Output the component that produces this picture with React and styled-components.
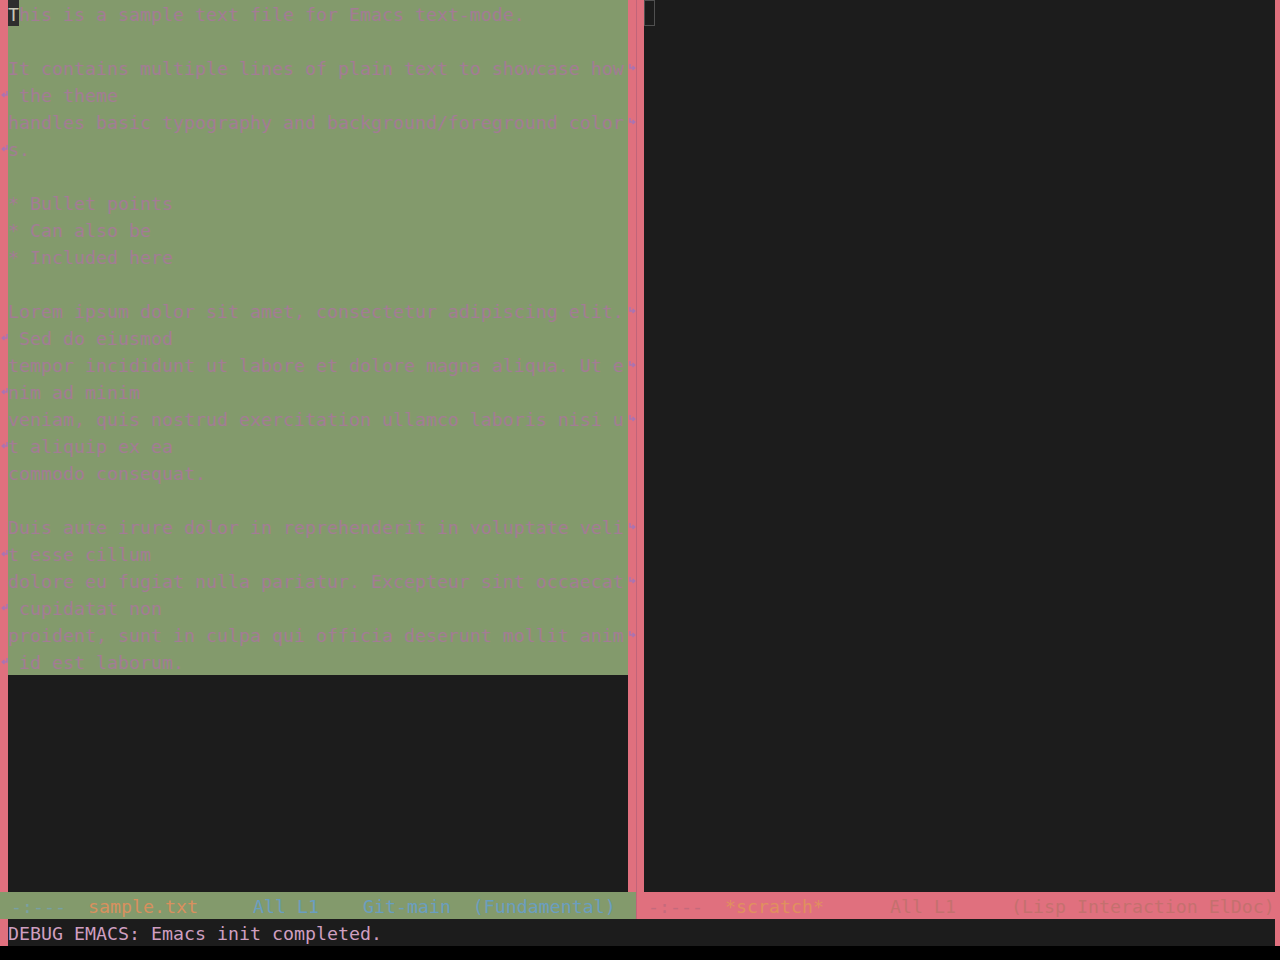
import React from "react";
import styled, { createGlobalStyle } from "styled-components";

const PINK = "#e0707e";
const GREEN = "#839a6c";
const DARK = "#1c1c1c";
const LINE = 27;

const Global = createGlobalStyle`
  html, body { margin: 0; padding: 0; background: #000; }
  body { font-family: "DejaVu Sans Mono", "Liberation Mono", monospace; }
`;

const Frame = styled.div`
  width: 1274px;
  height: 946px;
  display: grid;
  grid-template-rows: 1fr ${LINE}px;
  background: ${PINK};
  font-family: "DejaVu Sans Mono", monospace;
  font-size: 18.27px;
  line-height: 29px;
`;

const WindowsRow = styled.div`
  display: flex;
  min-height: 0;
`;

const Window = styled.div`
  display: flex;
  flex-direction: column;
  min-width: 0;
  width: ${(p) => (p.$width ? `${p.$width}px` : "auto")};
  flex: ${(p) => (p.$width ? "none" : "1")};
`;

const Body = styled.div`
  flex: 1;
  display: flex;
  min-height: 0;
`;

const FringeCol = styled.div`
  width: ${(p) => p.$w}px;
  flex: none;
  background: ${PINK};
  display: flex;
  flex-direction: column;
`;

const FringeCell = styled.div`
  height: ${LINE}px;
  display: flex;
  align-items: center;
  justify-content: center;
`;

const Border = styled.div`
  width: 1px;
  flex: none;
  background: #c2647a;
`;

const TextArea = styled.div`
  flex: 1;
  background: ${DARK};
  overflow: hidden;
  position: relative;
`;

const Buffer = styled.div`
  background: ${GREEN};
  color: #a37c95;
`;

const Line = styled.div`
  height: ${LINE}px;
  white-space: pre;
  overflow: hidden;
`;

const Cursor = styled.span`
  display: inline-block;
  width: 11px;
  height: 26px;
  line-height: 29px;
  vertical-align: top;
  background: #2e2e2e;
  color: #c8c8b8;
`;

const HollowCursor = styled.span`
  position: absolute;
  left: 0;
  top: 0;
  width: 11px;
  height: 26px;
  box-sizing: border-box;
  border: 1px solid #505050;
`;

const ModeLine = styled.div`
  height: ${LINE}px;
  flex: none;
  background: ${(p) => (p.$active ? GREEN : PINK)};
  white-space: pre;
  overflow: hidden;
`;

const Seg = styled.span`
  color: ${(p) => p.$c};
`;

const MiniRow = styled.div`
  display: flex;
`;

const MiniText = styled.div`
  flex: 1;
  background: ${DARK};
  color: #cf9fc0;
  white-space: pre;
  overflow: hidden;
`;

const LeftArrow = () => (
  <svg width="7" height="9" viewBox="0 0 7 9">
    <path d="M6 1 V5 H1.5 M3.5 3 L1.2 5 L3.5 7" stroke="#a874b4" strokeWidth="1.4" fill="none" />
  </svg>
);

const RightArrow = () => (
  <svg width="7" height="9" viewBox="0 0 7 9">
    <path d="M1 1 V5 H5.5 M3.5 3 L5.8 5 L3.5 7" stroke="#a874b4" strokeWidth="1.4" fill="none" />
  </svg>
);

const Fringe = ({ w, rows = 0, marks = [], Glyph }) => (
  <FringeCol $w={w}>
    {Array.from({ length: rows }, (_, i) => (
      <FringeCell key={i}>{marks.includes(i) && Glyph ? <Glyph /> : null}</FringeCell>
    ))}
  </FringeCol>
);

const lines = [
  "This is a sample text file for Emacs text-mode.",
  "",
  "It contains multiple lines of plain text to showcase how",
  " the theme",
  "handles basic typography and background/foreground color",
  "s.",
  "",
  "* Bullet points",
  "* Can also be",
  "* Included here",
  "",
  "Lorem ipsum dolor sit amet, consectetur adipiscing elit.",
  " Sed do eiusmod",
  "tempor incididunt ut labore et dolore magna aliqua. Ut e",
  "nim ad minim",
  "veniam, quis nostrud exercitation ullamco laboris nisi u",
  "t aliquip ex ea",
  "commodo consequat.",
  "",
  "Duis aute irure dolor in reprehenderit in voluptate veli",
  "t esse cillum",
  "dolore eu fugiat nulla pariatur. Excepteur sint occaecat",
  " cupidatat non",
  "proident, sunt in culpa qui officia deserunt mollit anim",
  " id est laborum.",
];

const rightMarks = [2, 4, 11, 13, 15, 19, 21, 23];
const leftMarks = [3, 5, 12, 14, 16, 20, 22, 24];

export default function App() {
  return (
    <>
      <Global />
      <Frame>
        <WindowsRow>
          <Window $width={636}>
            <Body>
              <Fringe w={8} rows={lines.length} marks={leftMarks} Glyph={LeftArrow} />
              <TextArea>
                <Buffer>
                  {lines.map((l, i) =>
                    i === 0 ? (
                      <Line key={i}>
                        <Cursor>{l[0]}</Cursor>
                        {l.slice(1)}
                      </Line>
                    ) : (
                      <Line key={i}>{l}</Line>
                    )
                  )}
                </Buffer>
              </TextArea>
              <Fringe w={8} rows={lines.length} marks={rightMarks} Glyph={RightArrow} />
            </Body>
            <ModeLine $active>
              <Seg $c="#78a0a4"> -:---  </Seg>
              <Seg $c="#d8905e">sample.txt</Seg>
              <Seg $c="#6a9ec0">     All L1    Git-main  (Fundamental)</Seg>
            </ModeLine>
          </Window>
          <Border />
          <Window>
            <Body>
              <Fringe w={7} />
              <TextArea>
                <HollowCursor />
              </TextArea>
            </Body>
            <ModeLine>
              <Seg $c="#c56a7c"> -:---  </Seg>
              <Seg $c="#e0905e">*scratch*</Seg>
              <Seg $c="#c4706e">      All L1     (Lisp Interaction ElDoc)</Seg>
            </ModeLine>
          </Window>
          <FringeCol $w={8} />
        </WindowsRow>
        <MiniRow>
          <FringeCol $w={8} />
          <MiniText>DEBUG EMACS: Emacs init completed.</MiniText>
          <FringeCol $w={8} />
        </MiniRow>
      </Frame>
    </>
  );
}
